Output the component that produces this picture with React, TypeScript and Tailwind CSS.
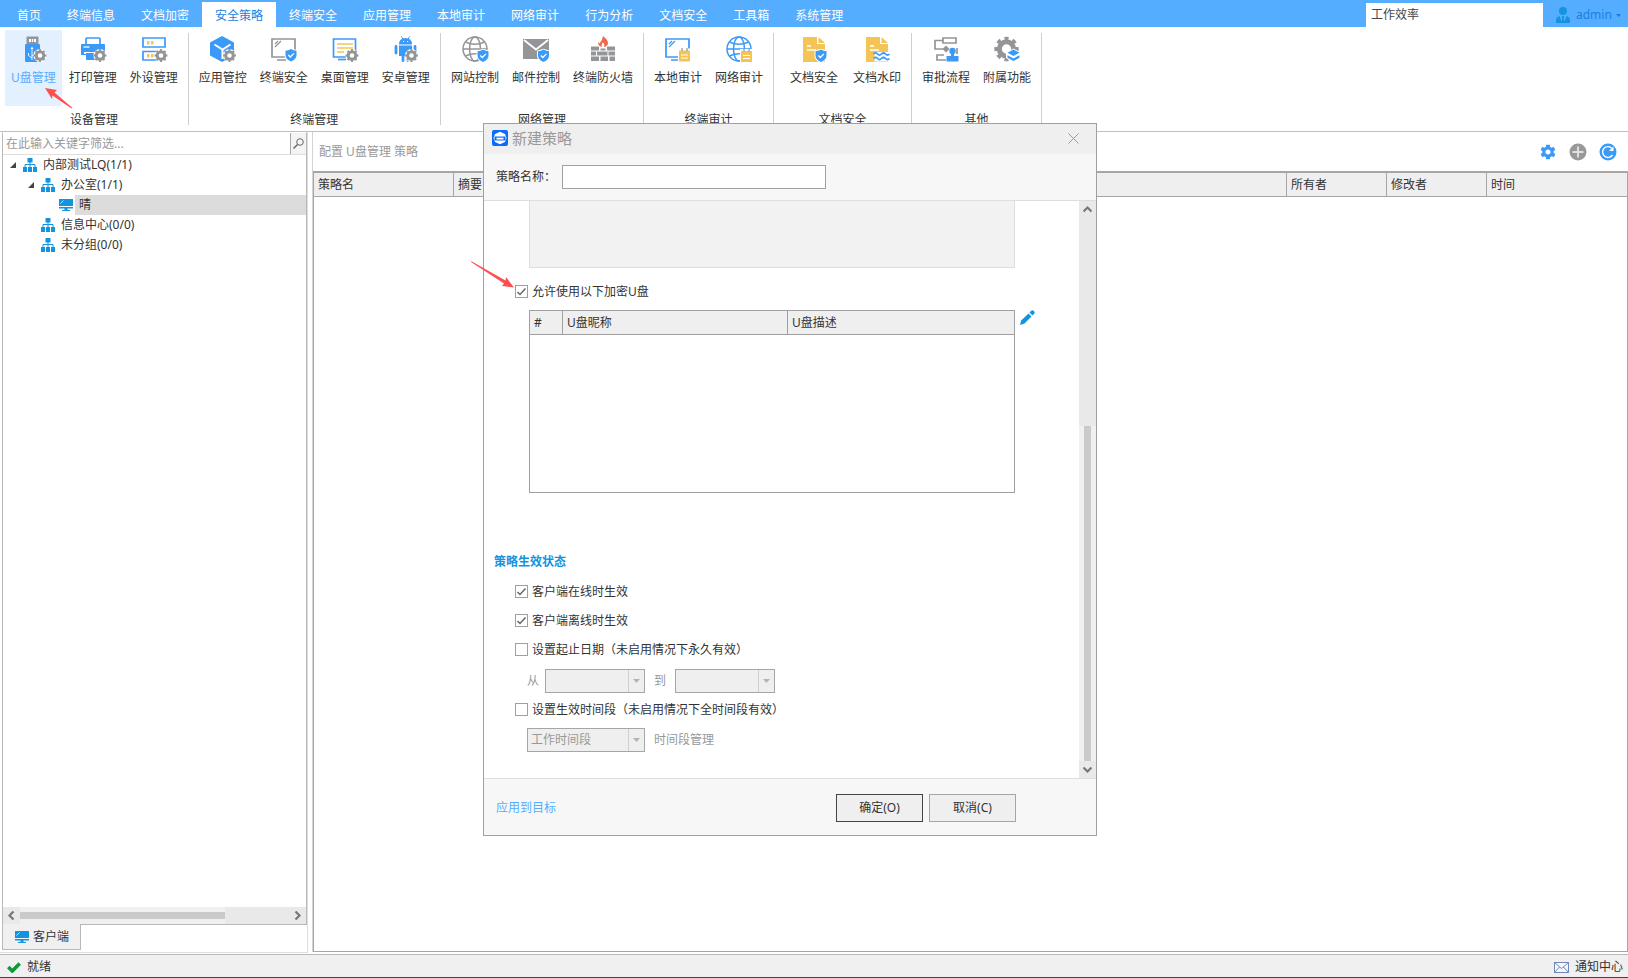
import React, { useState } from 'react';
import { IoMdSettings } from 'react-icons/io';

const BLUE = '#3b99f8';
const GRAY = '#939598';
const YELLOW = '#f4c555';

const TABS = [
  '首页',
  '终端信息',
  '文档加密',
  '安全策略',
  '终端安全',
  '应用管理',
  '本地审计',
  '网络审计',
  '行为分析',
  '文档安全',
  '工具箱',
  '系统管理',
];

/* ---------- icon parts ---------- */

function Gear({ cx, cy }: { cx: number; cy: number }) {
  return (
    <g fill="none" stroke={GRAY}>
      <circle cx={cx} cy={cy} r="6.6" fill="#fff" stroke="none" />
      <circle cx={cx} cy={cy} r="3.8" strokeWidth="3" />
      <circle cx={cx} cy={cy} r="5.4" strokeWidth="2" pathLength="16" strokeDasharray="1 1" strokeDashoffset="0.5" />
    </g>
  );
}

function Shield({ x, y }: { x: number; y: number }) {
  return (
    <g transform={`translate(${x} ${y})`}>
      <path d="M5.5-.8 12 1.2v5.2q0 4-6.5 7.2Q-1 10.400-1 6.400V1.200z" fill="#fff" />
      <path d="M5.5 0Q8 1.700 11 1.700V6q0 4-5.500 6.500Q0 10 0 6V1.700Q3 1.700 5.500 0z" fill={BLUE} />
      <path d="m2.800 6 2 2 3.600-3.600" fill="none" stroke="#fff" strokeWidth="1.3" />
    </g>
  );
}

function Note({ x, y }: { x: number; y: number }) {
  return (
    <g transform={`translate(${x} ${y})`}>
      <path d="M-1-1h13v13H-1z" fill="#fff" />
      <path d="M0 1h11v11H0z" fill={YELLOW} />
      <path d="M3-1.500v3M8-1.500v3" stroke={GRAY} strokeWidth="1.2" />
      <path d="M2 5.500h7M2 8.500h7" stroke="#fff" strokeWidth="1.2" />
    </g>
  );
}

function Globe({ color }: { color: string }) {
  return (
    <g fill="none" stroke={color} strokeWidth="1.5">
      <circle cx="13" cy="13" r="12" />
      <ellipse cx="13" cy="13" rx="5.5" ry="12" />
      <path d="M1 13h24M3.500 6q9.500 4.500 19 0M3.500 20q9.500-4.500 19 0" />
    </g>
  );
}

function Doc() {
  return (
    <g>
      <path d="M2 1h14v7h8v18H2z" fill={YELLOW} />
      <path d="M17.500 1 24 7h-6.500z" fill={YELLOW} />
      <path d="M6 10h4M6 14h9" stroke="#fff" strokeWidth="1.4" />
    </g>
  );
}

const ICONS: Record<string, React.ReactNode> = {
  usb: (
    <>
      <path d="M6.500 8V1.500q0-1 1-1h10q1 0 1 1V8z" fill={GRAY} />
      <path d="M9 3h7v3H9z" fill="#fff" />
      <path d="M11.500 3v3M13.500 3v3" stroke={GRAY} strokeWidth=".8" />
      <path d="M6 8h13q1 0 1 1v17H6q-1 0-1-1V9q0-1 1-1z" fill={BLUE} />
      <path d="M12 24V12M12 22l-3.500-2.500V17M12 20l3-2v-3" fill="none" stroke="#fff" strokeWidth=".9" />
      <path d="m12 10.500 1.500 2.500h-3z" fill="#fff" />
      <Gear cx={20} cy={19.5} />
    </>
  ),
  printer: (
    <>
      <path d="M6 8V3q0-1 1-1h12q1 0 1 1v5" fill="none" stroke={BLUE} strokeWidth="1.7" />
      <path d="M2 8h22q1 0 1 1v10H1V9q0-1 1-1z" fill={BLUE} />
      <path d="M3.500 11h6" stroke="#fff" strokeWidth="1.3" />
      <path d="M4 16h18v2H4z" fill="#fff" />
      <path d="M6 17h12v7H7q-1 0-1-1z" fill={BLUE} />
      <Gear cx={20} cy={19.5} />
    </>
  ),
  device: (
    <>
      <path d="M2 2h22v9H2zM2 15.500h22V24H2z" fill="none" stroke={BLUE} strokeWidth="1.7" />
      <path d="M6 5h2.500v3.500H6zM10 5h2.500v3.500H10zM6 18h2.500v3.500H6zM10 18h2.500v3.500H10z" fill={YELLOW} />
      <Gear cx={20} cy={19.5} />
    </>
  ),
  cube: (
    <>
      <path d="M12 0 24 6.500v13L12 26 0 19.500v-13z" fill={BLUE} />
      <path d="m4.500 8.500 8 5 8-5M12.500 13v10" fill="none" stroke="#fff" strokeWidth="2" />
      <Gear cx={19.5} cy={19.5} />
    </>
  ),
  screenShield: (
    <>
      <path d="M1 3h23v18H1z" fill="none" stroke={GRAY} strokeWidth="1.7" />
      <path d="m4 11 6-6M4 8l3-3M6 24h9" stroke={GRAY} strokeWidth="1.3" />
      <Shield x={14.5} y={13} />
    </>
  ),
  desktop: (
    <>
      <path d="M1.500 3h22v18h-22z" fill="none" stroke={BLUE} strokeWidth="1.7" />
      <path d="M5 8h16M5 12h16M5 16h7" stroke={YELLOW} strokeWidth="1.7" />
      <path d="M6 23.500h8" stroke={BLUE} strokeWidth="1.7" />
      <Gear cx={20} cy={19.5} />
    </>
  ),
  android: (
    <>
      <path d="M6 8.500Q6 2 12.500 2T19 8.500z" fill={BLUE} />
      <path d="M8.500.500 10 3.500M16.500.500 15 3.500" stroke={BLUE} />
      <path d="M10 5.500h1.200M14 5.500h1.200" stroke="#fff" />
      <path d="M6 9.500h13V20H6z" fill={BLUE} />
      <path d="M3 10.500V17M22 10.500V17M10 20v4.500M15 20v4.500" stroke={BLUE} strokeWidth="2.8" strokeLinecap="round" />
      <Gear cx={18.5} cy={19.5} />
    </>
  ),
  webShield: (
    <>
      <Globe color={GRAY} />
      <Shield x={15.5} y={13.5} />
    </>
  ),
  mail: (
    <>
      <path d="M0 3h26v20H0z" fill={GRAY} />
      <path d="m1 4 12 9.500L25 4" fill="none" stroke="#fff" strokeWidth="1.8" />
      <Shield x={15} y={13.5} />
    </>
  ),
  firewall: (
    <>
      <path d="M13 0q5 4 5 7 0 3-4 4 1-3-1-4.500Q11 8 12 11 8 10 8 6.500q1 0 1.500 1Q12.500 4 13 0z" fill="#f0694c" />
      <path
        d="M1 10.500h8v4H1zM17 10.500h8v4h-8zM10.500 12.500h5v2h-5zM1 15.500h5v4H1zM7 15.500h10.500v4H7zM18.500 15.500H25v4h-6.500zM1 20.500h8V25H1zM10.500 20.500H18V25h-7.500zM19.500 20.500H25V25h-5.500z"
        fill={GRAY}
      />
    </>
  ),
  screenNote: (
    <>
      <path d="M1 3h23v18H1z" fill="none" stroke={BLUE} strokeWidth="1.7" />
      <path d="m4 11 6-6M4 8l3-3M6 24h9" stroke={BLUE} strokeWidth="1.3" />
      <Note x={14} y={13.5} />
    </>
  ),
  webNote: (
    <>
      <Globe color={BLUE} />
      <Note x={15} y={14} />
    </>
  ),
  docShield: (
    <>
      <Doc />
      <Shield x={14.5} y={13.5} />
    </>
  ),
  docWater: (
    <>
      <Doc />
      <path d="M10 16h16v9.500H10z" fill="#fff" />
      <path d="M2 16h8.500v10H2z" fill={YELLOW} />
      <path d="M9.500 18q2-2 4 0t4 0 4 0 4 0M9.500 22.500q2-2 4 0t4 0 4 0 4 0" fill="none" stroke={BLUE} strokeWidth="1.7" />
    </>
  ),
  flow: (
    <>
      <path d="M10 2h13v5H10zM10 4.500H2V13h8M11 19H4v5h9" fill="none" stroke={GRAY} strokeWidth="1.7" />
      <path d="m13 9.500 3.500 3.500-3.500 3.500L9.500 13z" fill={GRAY} />
      <path d="M24 12v6" stroke={GRAY} strokeWidth="1.7" />
      <circle cx="19.5" cy="15" r="3.2" fill={BLUE} />
      <path d="M18 17h3v3h4.500v5.500h-12V20H18z" fill={BLUE} />
    </>
  ),
  extra: (
    <>
      <g fill="none" stroke={GRAY}>
        <circle cx="12.5" cy="13" r="7.2" strokeWidth="5" />
        <circle cx="12.5" cy="13" r="10.4" strokeWidth="3.6" pathLength="16" strokeDasharray="1 1" strokeDashoffset="0.5" />
      </g>
      <path d="m19.500 12.500 7.500 4V22l-7.500 4.500L12 22v-5.500z" fill="#fff" />
      <path d="m19.500 13.500 6 3.200-6 3.200-6-3.200z" fill={BLUE} />
      <path d="m13.500 19.200 6 3.200 6-3.200v2.600l-6 3.200-6-3.200z" fill={BLUE} />
    </>
  ),
};

interface Group {
  name: string;
  wide?: boolean;
  items: [string, string][];
}

const GROUPS: Group[] = [
  { name: '设备管理', items: [['U盘管理', 'usb'], ['打印管理', 'printer'], ['外设管理', 'device']] },
  {
    name: '终端管理',
    items: [['应用管控', 'cube'], ['终端安全', 'screenShield'], ['桌面管理', 'desktop'], ['安卓管理', 'android']],
  },
  { name: '网络管理', items: [['网站控制', 'webShield'], ['邮件控制', 'mail'], ['终端防火墙', 'firewall']] },
  { name: '终端审计', items: [['本地审计', 'screenNote'], ['网络审计', 'webNote']] },
  { name: '文档安全', wide: true, items: [['文档安全', 'docShield'], ['文档水印', 'docWater']] },
  { name: '其他', items: [['审批流程', 'flow'], ['附属功能', 'extra']] },
];

function OrgIcon() {
  return (
    <svg width="14" height="14" viewBox="0 0 14 14" className="shrink-0">
      <path d="M4.500 0h5v4.500h-5zM0 9h4v5H0zM5 9h4v5H5zM10 9h4v5h-4z" fill="#1493df" />
      <path d="M7 4v5M2 9V6.500h10V9" fill="none" stroke="#1493df" />
    </svg>
  );
}

function MonitorIcon() {
  return (
    <svg width="14" height="12" viewBox="0 0 14 12" className="shrink-0">
      <path d="M0 0h14v7H0zM0 8h14v1.500H0zM3 11h8v1H3zM5.500 9h3v2h-3z" fill="#1493df" />
      <path d="M1.500 4.500 4.500 1.500" stroke="#bfe3fb" />
    </svg>
  );
}

function Chevron({ d }: { d: string }) {
  return (
    <svg width="9" height="9" viewBox="0 0 9 9" fill="none" stroke="#777" strokeWidth="2.2">
      <path d={d} />
    </svg>
  );
}

/* ---------- shell ---------- */

function TopBar() {
  return (
    <header className="flex h-[27px] shrink-0 bg-[#55adff]">
      <nav className="flex items-end pl-1">
        {TABS.map((tab) => (
          <button
            key={tab}
            className={
              tab === '安全策略'
                ? 'h-[25px] bg-white px-[13px] pt-0.5 text-[#1a7fe0]'
                : 'h-[25px] px-[13px] pt-0.5 text-white'
            }
          >
            {tab}
          </button>
        ))}
      </nav>
      <input
        aria-label="搜索"
        defaultValue="工作效率"
        className="mt-[3px] ml-auto w-[177px] bg-white px-[5px] text-[#444] outline-none"
      />
      <button className="flex w-[85px] items-center gap-1.5 pt-[3px] pl-[13px] text-[#1a7fe0]">
        <svg width="14" height="16" viewBox="0 0 14 16" fill="#1493df">
          <circle cx="7" cy="4" r="4" />
          <path d="M0 16v-3q0-3 3.500-4l2 5.500L7 10l1.500 4.500 2-5.500Q14 10 14 13v3z" />
          <path d="M6 9h2l-.5 5h-1z" />
        </svg>
        admin
        <svg width="5" height="3" viewBox="0 0 5 3" fill="#1a7fe0" className="-ml-0.5">
          <path d="M0 0h5L2.500 3z" />
        </svg>
      </button>
    </header>
  );
}

function Ribbon() {
  return (
    <div className="flex h-[105px] shrink-0 border-b border-[#bfbfbf] bg-white">
      {GROUPS.map((group, i) => (
        <React.Fragment key={group.name}>
          <section className="flex flex-col items-center">
            <div
              className={
                group.wide
                  ? 'flex gap-[3px] pt-[3px] pr-1 pl-[10px]'
                  : i === 0
                    ? 'flex gap-px pt-[3px] pr-1 pl-[5px]'
                    : 'flex gap-px px-1 pt-[3px]'
              }
            >
              {group.items.map(([label, icon]) => (
                <button
                  key={label}
                  className={
                    icon === 'usb'
                      ? 'flex h-[76px] flex-col items-center gap-2 bg-[#e3f0ff] px-1.5 pt-1.5 text-[#55adff]'
                      : 'flex h-[76px] flex-col items-center gap-2 px-1.5 pt-1.5'
                  }
                >
                  <svg width="26" height="26" viewBox="0 0 26 26" overflow="visible">
                    {ICONS[icon]}
                  </svg>
                  {label}
                </button>
              ))}
            </div>
            <h2 className="mt-1.5">{group.name}</h2>
          </section>
          <div className="my-1.5 w-px bg-[#cfcfcf]" />
        </React.Fragment>
      ))}
    </div>
  );
}

interface TreeRowProps {
  label: string;
  level: number;
  open?: boolean;
  selected?: boolean;
}

function TreeRow({ label, level, open, selected }: TreeRowProps) {
  return (
    <li className="flex h-5 items-center" style={{ paddingLeft: 7 + (level - 1) * 18 }}>
      <span className="flex w-[13px] shrink-0">
        {open && (
          <svg width="6" height="6" viewBox="0 0 6 6" fill="#444">
            <path d="M6 0v6H0z" />
          </svg>
        )}
      </span>
      {selected ? <MonitorIcon /> : <OrgIcon />}
      <span className={selected ? 'ml-0.5 h-5 flex-1 bg-[#dcdcdc] pl-1 leading-5' : 'pl-1.5'}>{label}</span>
    </li>
  );
}

function Sidebar() {
  return (
    <aside className="mb-px flex w-[308px] shrink-0 flex-col border-r border-b border-[#dedede] pl-0.5">
      <div className="flex min-h-0 flex-1 flex-col border border-[#b8b8b8] border-t-white">
        <div className="flex h-[22px] border-b border-[#dedede]">
          <input
            aria-label="筛选"
            placeholder="在此输入关键字筛选..."
            className="min-w-0 flex-1 px-[3px] outline-none placeholder:text-[#999]"
          />
          <button aria-label="查找" className="flex w-4 items-center justify-center border-l border-[#a8a8a8] bg-[#f4f4f4]">
            <svg width="11" height="11" viewBox="0 0 11 11" fill="none" stroke="#666">
              <circle cx="7" cy="4" r="3.3" />
              <path d="M4.500 6.500.500 10.500" strokeWidth="1.5" />
            </svg>
          </button>
        </div>
        <ul className="flex-1">
          <TreeRow level={1} label="内部测试LQ(1/1)" open />
          <TreeRow level={2} label="办公室(1/1)" open />
          <TreeRow level={3} label="晴" selected />
          <TreeRow level={2} label="信息中心(0/0)" />
          <TreeRow level={2} label="未分组(0/0)" />
        </ul>
        <div className="flex h-[17px] items-center bg-[#e9e9e9]">
          <span className="flex w-[17px] justify-center">
            <Chevron d="M6.500.500 2.500 4.500l4 4" />
          </span>
          <span className="flex h-full w-[205px] items-center bg-[#f0f0f0]">
            <span className="h-[7px] w-full bg-[#cacaca]" />
          </span>
          <span className="ml-auto flex w-[17px] justify-center">
            <Chevron d="m2.500.500 4 4-4 4" />
          </span>
        </div>
      </div>
      <button className="-mt-px mb-0.5 flex h-[26px] w-[79px] items-center gap-1 border border-t-0 border-[#b8b8b8] bg-[#f0f0f0] pl-3">
        <MonitorIcon />
        客户端
      </button>
    </aside>
  );
}

function PolicyPanel() {
  return (
    <main className="mb-0.5 ml-1 flex min-w-0 flex-1 flex-col border-l border-[#d4d4d4]">
      <div className="flex h-[39px] items-center pt-px pr-[11px] pl-1.5 text-[#999]">
        <h1 className="mr-auto">配置 U盘管理 策略</h1>
        <div className="flex items-center gap-3">
          <button aria-label="设置">
            <IoMdSettings size={18} color={BLUE} />
          </button>
          <button aria-label="添加">
            <svg width="18" height="18" viewBox="0 0 18 18">
              <circle cx="9" cy="9" r="8.5" fill="#999" />
              <path d="M9 3.500v11M3.500 9h11" stroke="#e0e0e0" strokeWidth="2" />
            </svg>
          </button>
          <button aria-label="刷新">
            <svg width="18" height="18" viewBox="0 0 18 18" fill="none">
              <circle cx="9" cy="9" r="8.5" fill={BLUE} />
              <path d="M13.500 12A5.400 5.400 0 1 1 13 5.400" stroke="#fff" strokeWidth="1.4" />
              <path d="M14.500 3.500V8H10z" fill="#fff" />
            </svg>
          </button>
        </div>
      </div>
      <div className="flex-1 border border-t-2 border-[#a6a6a6]">
        <table className="w-full table-fixed border-separate border-spacing-0 text-left">
          <thead>
            <tr className="h-6 bg-[#efefef]">
              <th className="w-[140px] border-r border-b border-[#a6a6a6] pl-1 font-normal">策略名</th>
              <th className="border-r border-b border-[#a6a6a6] pl-1 font-normal">摘要</th>
              <th className="w-[100px] border-r border-b border-[#a6a6a6] pl-1 font-normal">所有者</th>
              <th className="w-[100px] border-r border-b border-[#a6a6a6] pl-1 font-normal">修改者</th>
              <th className="w-[140px] border-b border-[#a6a6a6] pl-1 font-normal">时间</th>
            </tr>
          </thead>
        </table>
      </div>
    </main>
  );
}

/* ---------- dialog ---------- */

function Check({ label, initial = false }: { label: string; initial?: boolean }) {
  const [checked, setChecked] = useState(initial);
  return (
    <label className="flex h-4 items-start gap-1">
      <span className="grid pt-px">
        <input
          type="checkbox"
          checked={checked}
          onChange={(e) => setChecked(e.target.checked)}
          className="col-start-1 row-start-1 size-[13px] appearance-none border border-[#a0a0a0] bg-white"
        />
        {checked && (
          <svg width="13" height="13" viewBox="0 0 13 13" className="pointer-events-none col-start-1 row-start-1">
            <path d="m2.500 7 2.500 2.500L10.500 3.500" fill="none" stroke="#666" strokeWidth="1.5" />
          </svg>
        )}
      </span>
      {label}
    </label>
  );
}

function Combo({ label, value = '', wide }: { label: string; value?: string; wide?: boolean }) {
  return (
    <span
      className={
        wide
          ? 'flex h-6 w-[118px] border border-[#a6a6a6] bg-[#efefef]'
          : 'flex h-6 w-[100px] border border-[#a6a6a6] bg-[#efefef]'
      }
    >
      <select aria-label={label} disabled className="min-w-0 flex-1 appearance-none pl-[3px] text-[#999] opacity-100">
        <option>{value}</option>
      </select>
      <span className="flex w-4 items-center justify-center border-l border-[#cfcfcf]">
        <svg width="7" height="4" viewBox="0 0 7 4" fill="#b4b4b4">
          <path d="M0 0h7L3.500 4z" />
        </svg>
      </span>
    </span>
  );
}

function PolicyDialog() {
  return (
    <div
      role="dialog"
      aria-label="新建策略"
      className="absolute top-[123px] left-[483px] flex w-[614px] flex-col border border-[#a0a0a0] bg-white"
    >
      <div className="flex h-[30px] items-center bg-[#efefef] pr-[17px] pb-0.5 pl-2">
        <svg width="16" height="16" viewBox="0 0 16 16">
          <rect width="16" height="16" rx="2" fill="#0a6cff" />
          <path d="M8 1.800 13 4l1.500 4L13 12l-5 2.200L3 12 1.500 8 3 4z" fill="#fff" />
          <path d="M2.500 6.500h11v4h-11z" fill="#0a6cff" />
          <path d="M4.500 7.700h7v1.800h-7z" fill="#fff" />
        </svg>
        <h2 className="ml-1 text-[15px] text-[#999]">新建策略</h2>
        <button aria-label="关闭" className="ml-auto">
          <svg width="11" height="11" viewBox="0 0 11 11" stroke="#999">
            <path d="m.500.500 10 10M10.500.500l-10 10" />
          </svg>
        </button>
      </div>
      <div className="flex h-[47px] items-center border-b border-[#dedede] bg-[#f7f7f7] pl-3">
        <label htmlFor="policy-name" className="mr-1.5 w-[60px]">
          策略名称：
        </label>
        <input id="policy-name" className="h-6 w-[264px] border border-[#a0a0a0] bg-white px-1 outline-none" />
      </div>

      <div className="flex">
        <div className="flex flex-1 flex-col pb-[26px] pl-[10px]">
          <div className="ml-[35px] h-[67px] w-[486px] border border-t-0 border-[#dedede] bg-[#f2f2f2]" />
          <div className="mt-4 ml-[21px]">
            <Check label="允许使用以下加密U盘" initial />
          </div>
          <div className="mt-[10px] ml-[35px] flex gap-[5px]">
            <div className="h-[183px] w-[486px] border border-[#a0a0a0]">
              <table className="w-full table-fixed border-separate border-spacing-0 text-left">
                <thead>
                  <tr className="h-6 bg-[#efefef]">
                    <th className="w-[33px] border-r border-b border-[#a0a0a0] pl-1 font-normal">#</th>
                    <th className="w-[225px] border-r border-b border-[#a0a0a0] pl-1 font-normal">U盘昵称</th>
                    <th className="border-b border-[#a0a0a0] pl-1 font-normal">U盘描述</th>
                  </tr>
                </thead>
              </table>
            </div>
            <button aria-label="编辑" className="self-start">
              <svg width="15" height="15" viewBox="0 0 15 15" fill="#1493df">
                <path d="M0 15 1.200 10.500 8.500 3.500 11.500 6.500 4.500 13.500z" />
                <path d="m9.500 2.500 1.700-1.700q1.300-1.200 2.700.200t.200 2.700L12.500 5.400z" />
              </svg>
            </button>
          </div>

          <h3 className="mt-[61px] font-bold text-[#1493df]">策略生效状态</h3>
          <div className="mt-[14px] ml-[21px] flex flex-col gap-[13px]">
            <Check label="客户端在线时生效" initial />
            <Check label="客户端离线时生效" initial />
            <Check label="设置起止日期（未启用情况下永久有效）" />
          </div>
          <div className="mt-[11px] ml-[33px] flex items-center text-[#999]">
            <span className="mr-1.5">从</span>
            <Combo label="从" />
            <span className="mx-[9px]">到</span>
            <Combo label="到" />
          </div>
          <div className="mt-[9px] ml-[21px]">
            <Check label="设置生效时间段（未启用情况下全时间段有效）" />
          </div>
          <div className="mt-[10px] ml-[33px] flex items-center gap-[9px] text-[#999]">
            <Combo label="时间段" value="工作时间段" wide />
            <span>时间段管理</span>
          </div>
        </div>
        <div className="flex w-[17px] flex-col bg-[#e9e9e9]">
          <span className="flex h-[17px] items-center justify-center">
            <Chevron d="m.500 6.500 4-4 4 4" />
          </span>
          <span className="flex-1" />
          <span className="flex h-[335px] justify-center bg-[#f0f0f0]">
            <span className="w-[7px] bg-[#cacaca]" />
          </span>
          <span className="flex h-[17px] items-center justify-center">
            <Chevron d="m.500 2.500 4 4 4-4" />
          </span>
        </div>
      </div>

      <div className="flex h-[57px] items-center gap-1.5 border-t border-[#dedede] bg-[#f7f7f7] pt-0.5 pr-20 pl-3">
        <a href="#target" className="mr-auto text-[#55adff]">
          应用到目标
        </a>
        <button className="h-7 w-[87px] border border-[#444] bg-[#efefef]">确定(O)</button>
        <button className="h-7 w-[87px] border border-[#a6a6a6] bg-[#efefef]">取消(C)</button>
      </div>
    </div>
  );
}

function StatusBar() {
  return (
    <footer className="flex h-6 shrink-0 items-center border-t border-b border-t-[#b8b8b8] border-b-[#444] bg-[#f0f0f0] pt-0.5 pr-[5px] pl-[7px]">
      <svg width="14" height="11" viewBox="0 0 14 11" fill="none" stroke="#0c9b3c" strokeWidth="3.6">
        <path d="m1.300 5 4 4L12.700 1.500" />
      </svg>
      <span className="ml-1.5">就绪</span>
      <button className="ml-auto flex items-center gap-1.5">
        <svg width="15" height="11" viewBox="0 0 15 11" fill="#f4f7fd" stroke="#7187b8">
          <path d="M.500.500h14v10H.500z" />
          <path d="m.500.500 7 6 7-6M.500 10.500 5.500 5M14.500 10.500 9.500 5" fill="none" />
        </svg>
        通知中心
      </button>
    </footer>
  );
}

interface PointerProps {
  className: string;
  viewBox: string;
  points: string;
}

function Pointer({ className, viewBox, points }: PointerProps) {
  return (
    <svg viewBox={viewBox} className={className} fill="#fb5050">
      <polygon points={points} />
    </svg>
  );
}

export default function App() {
  return (
    <div
      lang="zh-CN"
      className="relative flex h-screen flex-col overflow-hidden bg-white font-['Noto_Sans','Noto_Sans_CJK_SC',sans-serif] text-[12px] leading-4 text-[#333]"
    >
      <TopBar />
      <Ribbon />
      <div className="flex min-h-0 flex-1">
        <Sidebar />
        <PolicyPanel />
      </div>
      <StatusBar />
      <PolicyDialog />
      <Pointer
        className="pointer-events-none absolute top-[88px] left-[45px] h-[21px] w-[28px]"
        viewBox="0 0 28 21"
        points="0,0 12,2 9.5,4.5 27,19.5 26.5,20.5 7.5,7.5 7,11"
      />
      <Pointer
        className="pointer-events-none absolute top-[261px] left-[470px] h-[27px] w-[44px]"
        viewBox="0 0 44 27"
        points="44,26.5 32,25 34,22.5 1,1 1.5,0.2 35.5,19.5 36,16"
      />
    </div>
  );
}
